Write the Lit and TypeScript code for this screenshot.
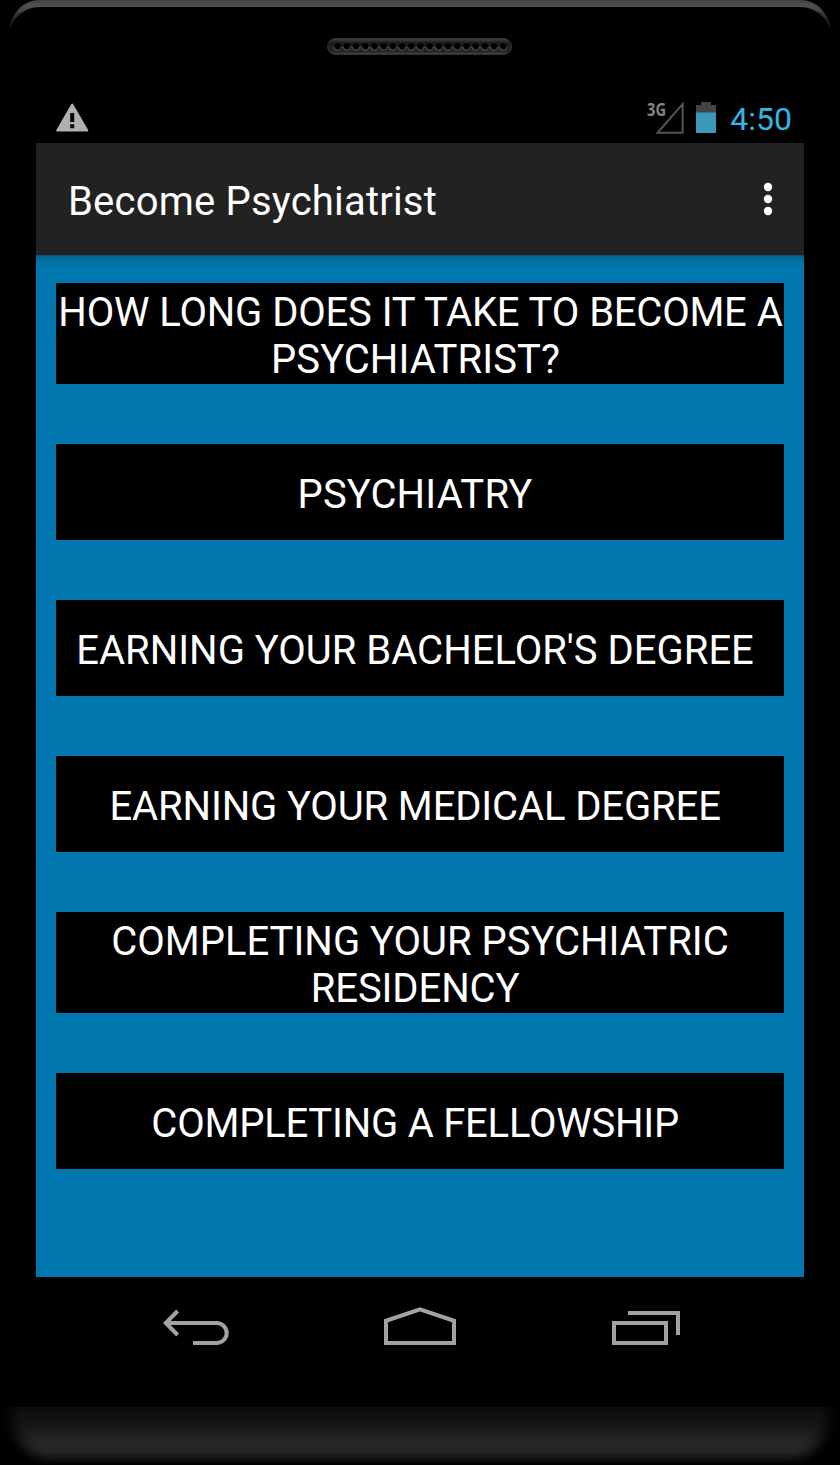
import { LitElement, html, css } from "lit";
import { customElement } from "lit/decorators.js";
import { styleMap } from "lit/directives/style-map.js";

interface Line {
  text: string;
  tracking: number;
  gap?: number;
}

// A trailing no-break space keeps the slight left offset of a label's last line.
const topics: Line[][] = [
  [
    { text: "HOW LONG DOES IT TAKE TO BECOME A", tracking: -0.23, gap: 0.45 },
    { text: "PSYCHIATRIST?\u00a0", tracking: 0.1 },
  ],
  [{ text: "PSYCHIATRY\u00a0", tracking: 0.15 }],
  [{ text: "EARNING YOUR BACHELOR'S DEGREE\u00a0", tracking: 0 }],
  [{ text: "EARNING YOUR MEDICAL DEGREE\u00a0", tracking: -0.13 }],
  [
    { text: "COMPLETING YOUR PSYCHIATRIC", tracking: 0 },
    { text: "RESIDENCY\u00a0", tracking: -0.1 },
  ],
  [{ text: "COMPLETING A FELLOWSHIP\u00a0", tracking: -0.23 }],
];

@customElement("status-bar")
export class StatusBar extends LitElement {
  static styles = css`
    :host {
      display: flex;
      align-items: flex-end;
      height: 50px;
      padding: 0 12px 0 20px;
      box-sizing: border-box;
    }
    .warn { display: block; margin-bottom: 11px; }
    .right { display: flex; align-items: flex-end; margin-left: auto; }
    .signal { display: block; margin: 0 11px 9px 0; }
    .battery { display: block; margin: 0 14px 10px 0; }
    .net { font: bold 18px "Open Sans", sans-serif; fill: #858585; }
    .time { font-size: 32px; line-height: 38px; color: #33b5e5; margin-bottom: 5px; }
  `;
  render() {
    return html`
      <svg class="warn" width="33" height="29" viewBox="0 0 33 29">
        <path d="M16.2 1.5 31.3 27.6H1.2Z" fill="#b0b0b0" stroke="#b0b0b0" stroke-width="2" stroke-linejoin="round" />
        <path d="M14.2 10h4v9h-4zM14.2 21.3h4v4h-4z" fill="#000" />
      </svg>
      <div class="right">
        <svg class="signal" width="40" height="40" viewBox="-2 -6 40 40">
          <path d="M35.6 4.2V32.8H10.5Z" fill="none" stroke="#555" stroke-width="2" />
          <text class="net" x="0" y="15.5" textLength="19" lengthAdjust="spacingAndGlyphs">3G</text>
        </svg>
        <svg class="battery" width="20" height="31" viewBox="0 0 20 31">
          <path d="M5 0h10v3h5v9H0V3h5z" fill="#444" />
          <path d="M0 10.5h20V31H0z" fill="#3c97bc" />
        </svg>
        <span class="time">4:50</span>
      </div>
    `;
  }
}

@customElement("nav-bar")
export class NavBar extends LitElement {
  static styles = css`
    :host {
      display: flex;
      height: 130px;
      padding: 29px 124px 0 126px;
      justify-content: space-between;
      box-sizing: border-box;
    }
    .icon { display: block; fill: none; stroke: #a2a2a2; stroke-width: 4; }
  `;
  render() {
    return html`
      <svg class="icon" width="68" height="42" viewBox="0 0 68 42">
        <path d="M3.5 17H54.5a10.2 10 0 0 1 10.2 10.2a10.2 10 0 0 1 -10.2 9.8H31" />
        <path d="M15.6 5 3.8 17 15.6 29" />
      </svg>
      <svg class="icon" width="73" height="42" viewBox="0 0 73 42">
        <path d="M2 37V14.8L36 3.3 70 14.8V37Z" />
      </svg>
      <svg class="icon" width="69" height="42" viewBox="0 0 69 42">
        <path d="M3 17H55V37H3ZM17 7H67V29" />
      </svg>
    `;
  }
}

@customElement("app-root")
export class AppRoot extends LitElement {
  static styles = css`
    :host {
      display: block;
      font-family: Roboto, sans-serif;
      background: #000;
      color: #fff;
    }
    .phone {
      display: flex;
      flex-direction: column;
      height: 1465px;
      overflow: hidden;
    }
    .top { display: block; flex: none; }
    .screen { flex: none; width: 768px; margin: 0 36px; }
    .bar {
      display: flex;
      align-items: center;
      justify-content: space-between;
      height: 112px;
      padding: 0 30px 0 32px;
      box-sizing: border-box;
      background: #222;
    }
    .title { margin: 0; padding-top: 5px; font-size: 40px; font-weight: 400; line-height: 47px; letter-spacing: 0.2px; }
    .more { display: block; }
    .content {
      display: flex;
      flex-direction: column;
      gap: 60px;
      height: 1022px;
      padding: 28px 20px 0;
      box-sizing: border-box;
      background: linear-gradient(#075470 0, #04688f 2px, #0072a4 7px, #0077ae 14px);
    }
    .topic {
      display: flex;
      flex-direction: column;
      align-items: center;
      justify-content: center;
      min-height: 96px;
      padding: 6px 0 1px;
      border: 0;
      box-sizing: border-box;
      background: #000;
      color: #fff;
      font: 400 40px/47px Roboto, sans-serif;
    }
    .topic:first-child { padding-left: 1px; }
    .line { display: block; white-space: nowrap; }
    .chin { display: block; flex: none; }
  `;

  render() {
    return html`
      <div class="phone">
        <svg class="top" width="840" height="93" viewBox="0 0 840 93">
          <defs>
            <linearGradient id="rim" x1="0" y1="0" x2="0" y2="40" gradientUnits="userSpaceOnUse">
              <stop offset="0" stop-color="#424242" />
              <stop offset=".16" stop-color="#505050" />
              <stop offset=".35" stop-color="#343434" />
              <stop offset=".8" stop-color="#000" />
            </linearGradient>
            <linearGradient id="slot" x1="0" y1="0" x2="0" y2="1">
              <stop offset="0" stop-color="#484848" />
              <stop offset=".25" stop-color="#1d1d1d" />
              <stop offset=".8" stop-color="#222" />
              <stop offset="1" stop-color="#454545" />
            </linearGradient>
            <pattern id="holes" x="333" y="41" width="9.2" height="12" patternUnits="userSpaceOnUse">
              <circle cx="4.6" cy="6" r="3.7" fill="#000" />
              <path d="M.9 5.5a3.7 3.7 0 0 0 7.4 0" fill="none" stroke="#606060" />
            </pattern>
          </defs>
          <path d="M7 40C8 16 22 0 39 0H801C818 0 832 16 833 40C830 20 818 7 799 7H41C22 7 10 20 7 40Z" fill="url(#rim)" />
          <rect x="327.5" y="38.5" width="184" height="16" rx="8" fill="url(#slot)" stroke="#333" />
          <rect x="333" y="41" width="174.8" height="12" fill="url(#holes)" />
        </svg>
        <div class="screen">
          <status-bar></status-bar>
          <header class="bar">
            <h1 class="title">Become Psychiatrist</h1>
            <svg class="more" width="12" height="34" viewBox="0 0 12 34" fill="#fff">
              <circle cx="6" cy="5" r="4.2" />
              <circle cx="6" cy="17" r="4.2" />
              <circle cx="6" cy="29" r="4.2" />
            </svg>
          </header>
          <main class="content">
            ${topics.map(
              (lines) => html`<button class="topic">
                ${lines.map(
                  (l) =>
                    html`<span
                      class="line"
                      style=${styleMap({ letterSpacing: `${l.tracking}px`, wordSpacing: `${l.gap ?? 0}px` })}
                      >${l.text}</span
                    >`
                )}
              </button>`
            )}
          </main>
          <nav-bar></nav-bar>
        </div>
        <svg class="chin" width="840" height="58" viewBox="0 0 840 58">
          <defs>
            <linearGradient id="body" x1="0" y1="0" x2="0" y2="1">
              <stop offset="0" stop-color="#0c0c0c" />
              <stop offset=".3" stop-color="#161616" />
              <stop offset=".62" stop-color="#262626" />
              <stop offset=".78" stop-color="#252525" />
              <stop offset=".96" stop-color="#0b0b0b" />
              <stop offset="1" stop-color="#000" />
            </linearGradient>
            <filter id="soft" x="-5%" y="-60%" width="110%" height="220%">
              <feGaussianBlur stdDeviation="6.5" />
            </filter>
            <mask id="edge" x="0" y="0" width="840" height="58" maskUnits="userSpaceOnUse">
              <path d="M11 -40V4C13 30 30 54 58 68H782C810 54 827 30 829 4V-40Z" fill="#fff" filter="url(#soft)" />
            </mask>
          </defs>
          <rect width="840" height="57" fill="url(#body)" mask="url(#edge)" />
        </svg>
      </div>
    `;
  }
}
